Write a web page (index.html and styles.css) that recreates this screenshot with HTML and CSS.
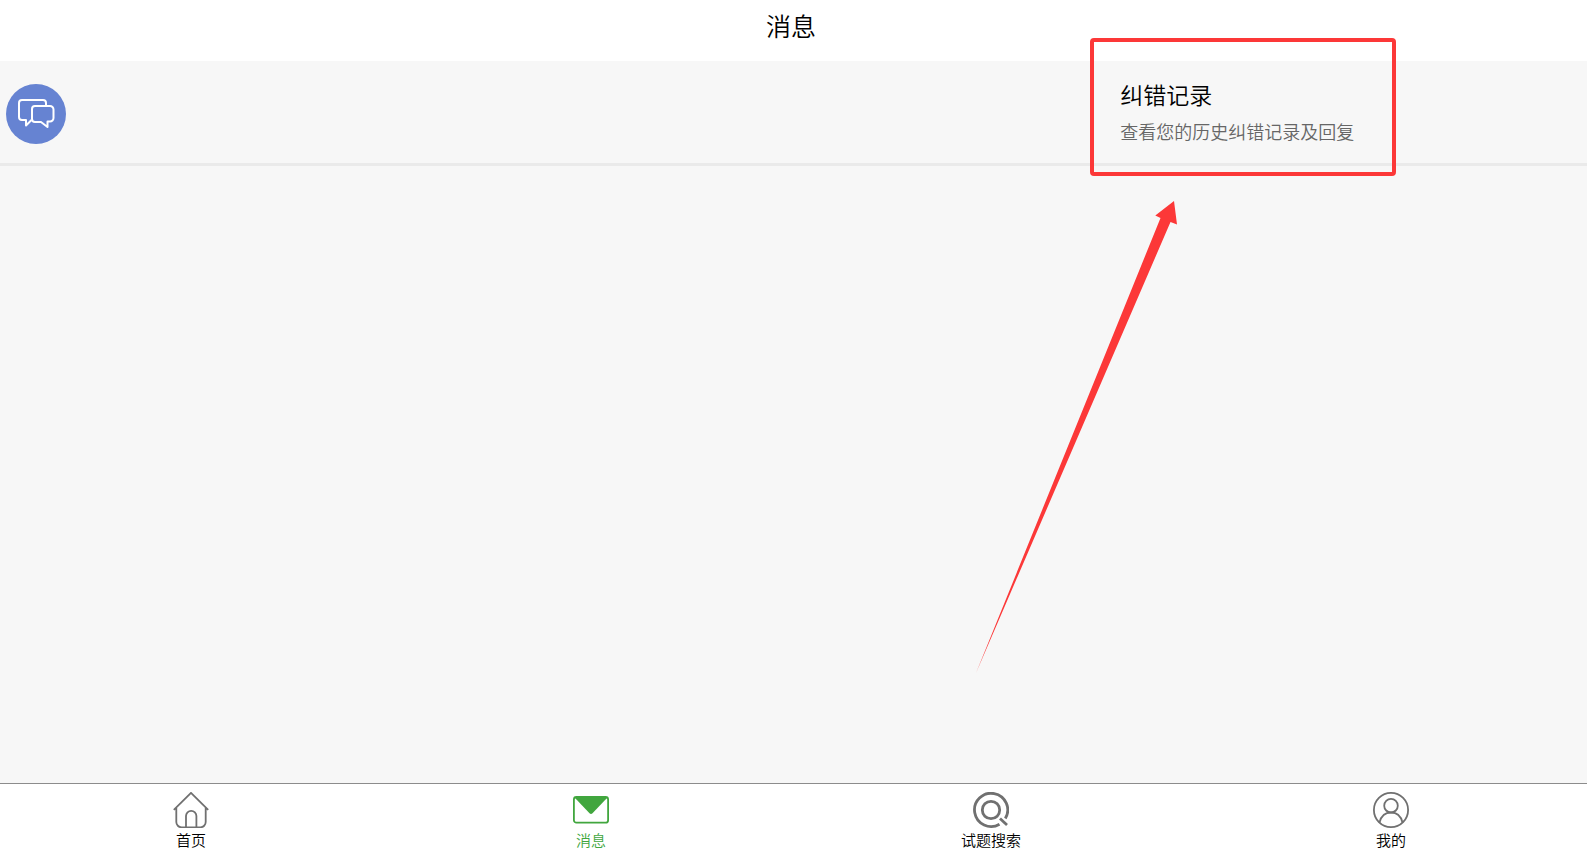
FILE: index.html
```html
<!DOCTYPE html>
<html lang="zh-CN">
<head>
  <meta charset="UTF-8">
  <meta name="viewport" content="width=device-width, initial-scale=1.0">
  <title>消息</title>
  <link rel="stylesheet" href="styles.css">
</head>
<body>
  <header class="header">
    <h1>消息</h1>
  </header>

  <main class="content">
    <a href="#record" class="message">
      <svg class="message-icon" viewBox="0 0 60 60" fill="none" stroke="#fff" stroke-width="2" stroke-linejoin="round" aria-hidden="true">
        <circle cx="30" cy="30" r="30" fill="#6683d2" stroke="none"/>
        <path d="M40 21.500V19a3 3 0 0 0-3-3H16a3 3 0 0 0-3 3v14a3 3 0 0 0 3 3h4v5.500L25.500 36"/>
        <path d="M29 22h15a3.500 3.500 0 0 1 3.500 3.500V34a3.500 3.500 0 0 1-3.500 3.500h-2.500V43L35 38h-6a3 3 0 0 1-3-3V25a3 3 0 0 1 3-3z"/>
      </svg>
      <div class="message-text">
        <h2>纠错记录</h2>
        <p>查看您的历史纠错记录及回复</p>
      </div>
    </a>
  </main>

  <nav class="tabbar">
    <a href="#home" class="tab">
      <svg class="tab-icon" viewBox="0 0 36 36" fill="none" stroke="#707070" stroke-width="1.800" aria-hidden="true">
        <path d="M.8 17.800L18 .9l17.200 16.900M3.300 15.500V30a5.300 5.300 0 0 0 5.300 5.300h18.800a5.300 5.300 0 0 0 5.300-5.300V15.500"/>
        <path d="M13 35V24a5.200 5.200 0 0 1 10.400 0v11"/>
      </svg>
      <span>首页</span>
    </a>
    <a href="#message" class="tab active">
      <svg class="tab-icon" viewBox="0 0 36 36" aria-hidden="true">
        <rect x=".9" y="5" width="34.200" height="25.700" rx="2.500" fill="#fff" stroke="#41a63e" stroke-width="1.800"/>
        <path d="M2 5h32v1L19.500 21.300q-1.500 1.400-3 0L2 6z" fill="#41a63e"/>
      </svg>
      <span>消息</span>
    </a>
    <a href="#search" class="tab">
      <svg class="tab-icon" viewBox="0 0 36 36" fill="none" stroke="#707070" stroke-width="2.800" aria-hidden="true">
        <path d="M26.500 32.200A16.600 16.600 0 1 1 32.300 26.500"/>
        <circle cx="18" cy="18" r="8.700"/>
        <path d="M27 26.500l7 6.500"/>
      </svg>
      <span>试题搜索</span>
    </a>
    <a href="#mine" class="tab">
      <svg class="tab-icon" viewBox="0 0 36 36" fill="none" stroke="#707070" stroke-width="1.800" aria-hidden="true">
        <circle cx="18" cy="18" r="17.100"/>
        <circle cx="18" cy="13.700" r="6.800"/>
        <path d="M6.500 30.500C8 24.500 12 20.500 18 20.500s10 4 11.500 10"/>
      </svg>
      <span>我的</span>
    </a>
  </nav>

  <!-- 标注 -->
  <div class="mark-box"></div>
  <svg class="mark-arrow" viewBox="0 0 202 473" aria-hidden="true">
    <path d="M198 0l3 23.500-6.500-2.500L0 472 184.500 17l-5.200-2.500z" fill="#fc3838"/>
  </svg>
</body>
</html>
```

FILE: styles.css
```css
* {
  margin: 0;
  padding: 0;
  box-sizing: border-box;
}
body {
  position: relative;
  display: flex;
  flex-direction: column;
  min-height: 100vh;
  background: #f7f7f7;
  color: #000;
  font-family: "Noto Sans CJK SC", sans-serif;
  font-weight: 350;
}
h1,
h2 {
  font-weight: 350;
}
a {
  color: inherit;
  text-decoration: none;
}
.header {
  padding: 7px 5px 18px 0;
  background: #fff;
  text-align: center;
}
.header h1 {
  font-size: 25px;
  line-height: 36px;
}
.content {
  flex: 1;
}
.message {
  display: grid;
  grid-template-columns: 12fr 5fr;
  align-items: center;
  padding: 16px 0 13px;
  border-bottom: 3px solid #eaeaea;
}
.message-icon {
  width: 60px;
  height: 60px;
  margin-left: 6px;
}
.message-text h2 {
  font-size: 23px;
  line-height: 35px;
}
.message-text p {
  color: #666;
  font-size: 18px;
  line-height: 38px;
}

/* 底部导航 */
.tabbar {
  display: grid;
  grid-template-columns: repeat(4, 1fr);
  gap: 18px;
  padding: 8px 5px 1px 0;
  border-top: 1px solid #8c8c8c;
  background: #fff;
}
.tab {
  display: flex;
  flex-direction: column;
  align-items: center;
  font-size: 15px;
  line-height: 24px;
}
.tab-icon {
  width: 36px;
  height: 36px;
}
.tab.active {
  color: #41a63e;
}

/* 标注 */
.mark-box {
  position: absolute;
  top: 38px;
  left: 1090px;
  width: 306px;
  height: 138px;
  border: 4px solid #fc3838;
  border-radius: 4px;
  pointer-events: none;
}
.mark-arrow {
  position: absolute;
  top: 201px;
  left: 976px;
  width: 202px;
  height: 473px;
  pointer-events: none;
}
```
